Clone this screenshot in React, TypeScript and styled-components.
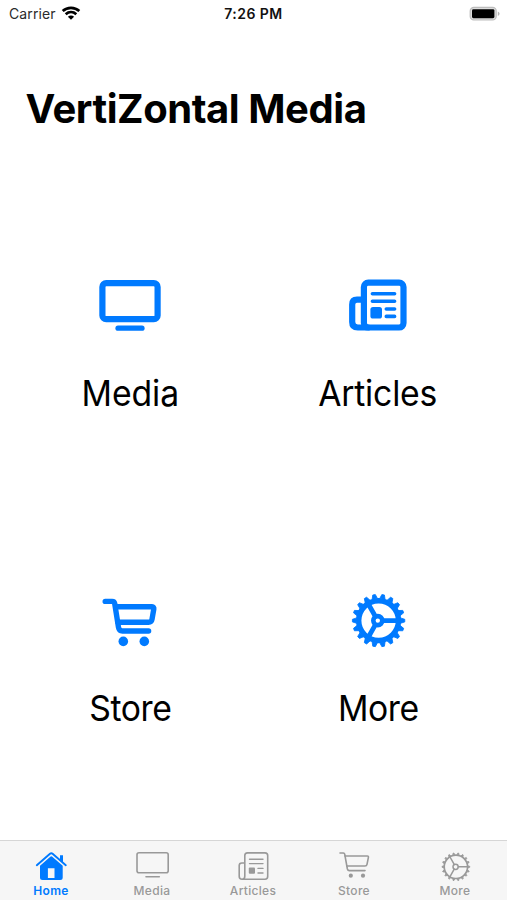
import React from "react";
import styled, { createGlobalStyle } from "styled-components";

const BLUE = "#007aff";
const GRAY = "#999999";

const GlobalStyle = createGlobalStyle`
  * { box-sizing: border-box; }
  body {
    margin: 0;
    background: #fff;
    color: #000;
    font-family: Inter, "Liberation Sans", sans-serif;
  }
`;

const Screen = styled.div`
  display: flex;
  flex-direction: column;
  height: 900px;
  width: 507px;
  overflow: hidden;
`;

const StatusBar = styled.header`
  display: grid;
  grid-template-columns: 1fr auto 1fr;
  align-items: center;
  height: 27px;
  padding: 0 7px 0 9px;
  font-size: 14px;
`;

const Carrier = styled.div`
  display: flex;
  align-items: center;
  gap: 5px;
  color: #2b2b2b;
  letter-spacing: 0.1px;
`;

const Clock = styled.div`
  margin-right: 2px;
  font-weight: 600;
  letter-spacing: 0.45px;
  color: #111;
`;

const BatterySlot = styled.div`
  display: flex;
  justify-content: flex-end;
`;

const Title = styled.h1`
  margin: 0;
  padding: 57px 0 0 25.5px;
  height: 243px;
  font-size: 40px;
  line-height: 50px;
  font-weight: 700;
  letter-spacing: -0.45px;
  white-space: nowrap;
`;

const Menu = styled.main`
  flex: 1;
  display: grid;
  grid-template-columns: 248px 248px;
  grid-template-rows: 315px 255px;
  padding-left: 6px;
`;

const Tile = styled.a`
  display: flex;
  flex-direction: column;
  align-items: center;
  color: ${BLUE};
`;

const TileLabel = styled.span<{ $spacing: number }>`
  margin-top: 32px;
  font-size: 35.5px;
  line-height: 44px;
  letter-spacing: ${(p) => p.$spacing}px;
  transform: scaleX(0.95);
  color: #000;
`;

const TabBar = styled.nav`
  display: grid;
  grid-template-columns: repeat(5, 101px);
  height: 60px;
  padding-left: 0.5px;
  background: #f6f6f6;
  border-top: 1px solid #d6d6d6;
`;

const Tab = styled.a<{ $active?: boolean }>`
  display: flex;
  flex-direction: column;
  align-items: center;
  gap: 1px;
  padding-top: 7px;
  color: ${(p) => (p.$active ? BLUE : GRAY)};
  font-size: 12px;
  font-weight: ${(p) => (p.$active ? 600 : 500)};
  letter-spacing: 0.3px;
  line-height: 16px;
`;

const Glyph = styled.svg`
  display: block;
  flex: none;
  fill: none;
  stroke: currentColor;
  stroke-linecap: round;
  stroke-linejoin: round;
`;

const solid = { fill: "currentColor", stroke: "none" };

const WifiIcon = () => (
  <Glyph width="20" height="15" viewBox="0 0 20 15">
    <g stroke="#000" strokeWidth="2.7">
      <path d="M1.7 5C6.3 .7 13.7 .7 18.3 5" strokeLinecap="butt" />
      <path d="M4.7 8.3C7.8 5.5 12.2 5.5 15.3 8.3" strokeLinecap="butt" />
    </g>
    <path d="M6.9 10.7C8.7 9.2 11.3 9.2 13.1 10.7L10 13.8Z" fill="#000" stroke="none" />
  </Glyph>
);

const BatteryIcon = () => (
  <Glyph width="31" height="16" viewBox="0 0 31 16">
    <rect x="1.2" y="1.4" width="26" height="12.6" rx="3.6" fill="#ddd" stroke="#bdbdbd" strokeWidth="1.2" />
    <rect x="3" y="3.2" width="22.4" height="9" rx="1.4" fill="#000" stroke="none" />
    <path d="M28.8 5.5Q30.6 6.3 30.6 7.8T28.8 10.1Z" fill="#b5b5b5" stroke="none" />
  </Glyph>
);

type CogProps = { cx: number; cy: number; r: number; width: number; from: number; to: number; base: number; tip: number };

const Cog = ({ cx, cy, r, width, from, to, base, tip }: CogProps) => (
  <>
    <circle cx={cx} cy={cy} r={r} strokeWidth={width} />
    {Array.from({ length: 18 }, (_, i) => (
      <path
        key={i}
        d={`M${cx + from} ${cy - base / 2}L${cx + to} ${cy - tip / 2}V${cy + tip / 2}L${cx + from} ${cy + base / 2}Z`}
        fill="currentColor"
        strokeWidth="0.8"
        transform={`rotate(${i * 20} ${cx} ${cy})`}
      />
    ))}
  </>
);

const DisplayLarge = () => (
  <Glyph width="80" height="70" viewBox="0 0 80 70">
    <rect x="12.4" y="13.2" width="55.2" height="36" rx="3.8" strokeWidth="6.2" />
    <path d="M28 58.2H52" strokeWidth="5.2" />
  </Glyph>
);

const NewsLarge = () => (
  <Glyph width="80" height="70" viewBox="-2 0 80 70">
    <rect x="23.9" y="12.7" width="39.6" height="44.8" rx="4.4" strokeWidth="6.2" />
    <path d="M23 29.6H17Q12.2 29.6 12.2 34.5V52Q12.2 57.5 17.8 57.5H28" strokeWidth="6.2" />
    <path d="M32.4 23.7H54.6M32.4 31.3H54.6M46.3 39H54.6M46.3 46.4H54.6" strokeWidth="3.6" />
    <rect x="30.4" y="37" width="11.6" height="11.6" rx="2.6" {...solid} />
  </Glyph>
);

const CartLarge = () => (
  <Glyph width="80" height="70" viewBox="0 0 80 70">
    <path d="M15.2 16.4H22.2Q24.3 16.4 24.7 18.6L28.5 42.4Q29.1 46 32.4 46H58.6" strokeWidth="5.4" />
    <path d="M26 21.8H62Q64.2 21.8 63.8 24L62 34.4Q61.5 37.2 58.6 37.2H28" strokeWidth="5.4" />
    <circle cx="33.3" cy="56.4" r="4.8" {...solid} />
    <circle cx="54.3" cy="56.4" r="4.8" {...solid} />
  </Glyph>
);

const GearLarge = () => (
  <Glyph width="80" height="70" viewBox="-2 0 80 70">
    <Cog cx={38.6} cy={35.6} r={19.9} width={5.4} from={22} to={26.2} base={5.4} tip={2.6} />
    <circle cx="37.8" cy="35.6" r="4.5" strokeWidth="4.6" />
    <path d="M44 35.6H58M35 30.8L28.6 19.5M35 40.4L28.6 51.7" strokeWidth="4.8" />
  </Glyph>
);

const HomeTab = () => (
  <Glyph width="40" height="34" viewBox="31 848 40 34">
    <path d="M36.8 865.2L50 853.7Q51.3 852.6 52.6 853.7L65.8 865.2" strokeWidth="1.9" />
    <path d="M60 855.2H63V863L60 860.2Z" {...solid} />
    <path d="M40 865.8L50.3 856.7Q51.3 855.8 52.3 856.7L62.7 865.8V877.5Q62.7 880 60.2 880H42.5Q40 880 40 877.5ZM47.9 868.2V878H54.5V868.2Z" fill="currentColor" fillRule="evenodd" stroke="none" />
  </Glyph>
);

const DisplayTab = () => (
  <Glyph width="40" height="34" viewBox="132 848 40 34">
    <rect x="137" y="852.8" width="31.2" height="20" rx="2" strokeWidth="1.6" />
    <path d="M146 876.8H159.3" strokeWidth="1.6" />
  </Glyph>
);

const NewsTab = () => (
  <Glyph width="40" height="34" viewBox="233 848 40 34">
    <path d="M244.8 863H241.8Q239.2 863 239.2 865.6V876.3Q239.2 879.3 242 879.3H265Q267.7 879.3 267.7 876.3V855.6Q267.7 852.9 265 852.9H247.5Q244.8 852.9 244.8 855.6V876.3Q244.8 879.3 242 879.3" strokeWidth="1.6" />
    <path d="M249.5 859.2H263M249.5 863.6H263M258 868.4H263M258 873H263" strokeWidth="1.4" />
    <rect x="248.8" y="867.6" width="6.2" height="6.2" rx="1" {...solid} />
  </Glyph>
);

const CartTab = () => (
  <Glyph width="40" height="34" viewBox="334 848 40 34">
    <path d="M340 853H343.3Q344.5 853 344.7 854.2L347.4 869Q347.8 870.6 349.4 870.6H365" strokeWidth="1.6" />
    <path d="M345 856H367.3Q368.6 856 368.4 857.3L367 864.4Q366.7 866 365 866H347" strokeWidth="1.6" />
    <circle cx="350.8" cy="875.7" r="2.1" {...solid} />
    <circle cx="363" cy="875.7" r="2.1" {...solid} />
  </Glyph>
);

const GearTab = () => (
  <Glyph width="40" height="34" viewBox="435 848 40 34">
    <Cog cx={455.9} cy={866.8} r={11.7} width={1.7} from={12.3} to={13.9} base={1.8} tip={0.9} />
    <circle cx="455.6" cy="866.8" r="2.6" strokeWidth="1.5" />
    <path d="M458.5 866.8H467M454.2 864.4L450 857M454.2 869.2L450 876.6" strokeWidth="1.5" />
  </Glyph>
);

const tiles = [
  { label: "Media", Icon: DisplayLarge, spacing: -0.1 },
  { label: "Articles", Icon: NewsLarge, spacing: -0.2 },
  { label: "Store", Icon: CartLarge, spacing: -0.4 },
  { label: "More", Icon: GearLarge, spacing: -0.5 },
];

const tabs = [
  { label: "Home", Icon: HomeTab },
  { label: "Media", Icon: DisplayTab },
  { label: "Articles", Icon: NewsTab },
  { label: "Store", Icon: CartTab },
  { label: "More", Icon: GearTab },
];

export default function App() {
  return (
    <Screen>
      <GlobalStyle />
      <StatusBar>
        <Carrier>
          Carrier
          <WifiIcon />
        </Carrier>
        <Clock>7:26 PM</Clock>
        <BatterySlot>
          <BatteryIcon />
        </BatterySlot>
      </StatusBar>
      <Title>VertiZontal Media</Title>
      <Menu>
        {tiles.map(({ label, Icon, spacing }) => (
          <Tile key={label}>
            <Icon />
            <TileLabel $spacing={spacing}>{label}</TileLabel>
          </Tile>
        ))}
      </Menu>
      <TabBar>
        {tabs.map(({ label, Icon }, i) => (
          <Tab key={label} $active={i === 0}>
            <Icon />
            {label}
          </Tab>
        ))}
      </TabBar>
    </Screen>
  );
}
